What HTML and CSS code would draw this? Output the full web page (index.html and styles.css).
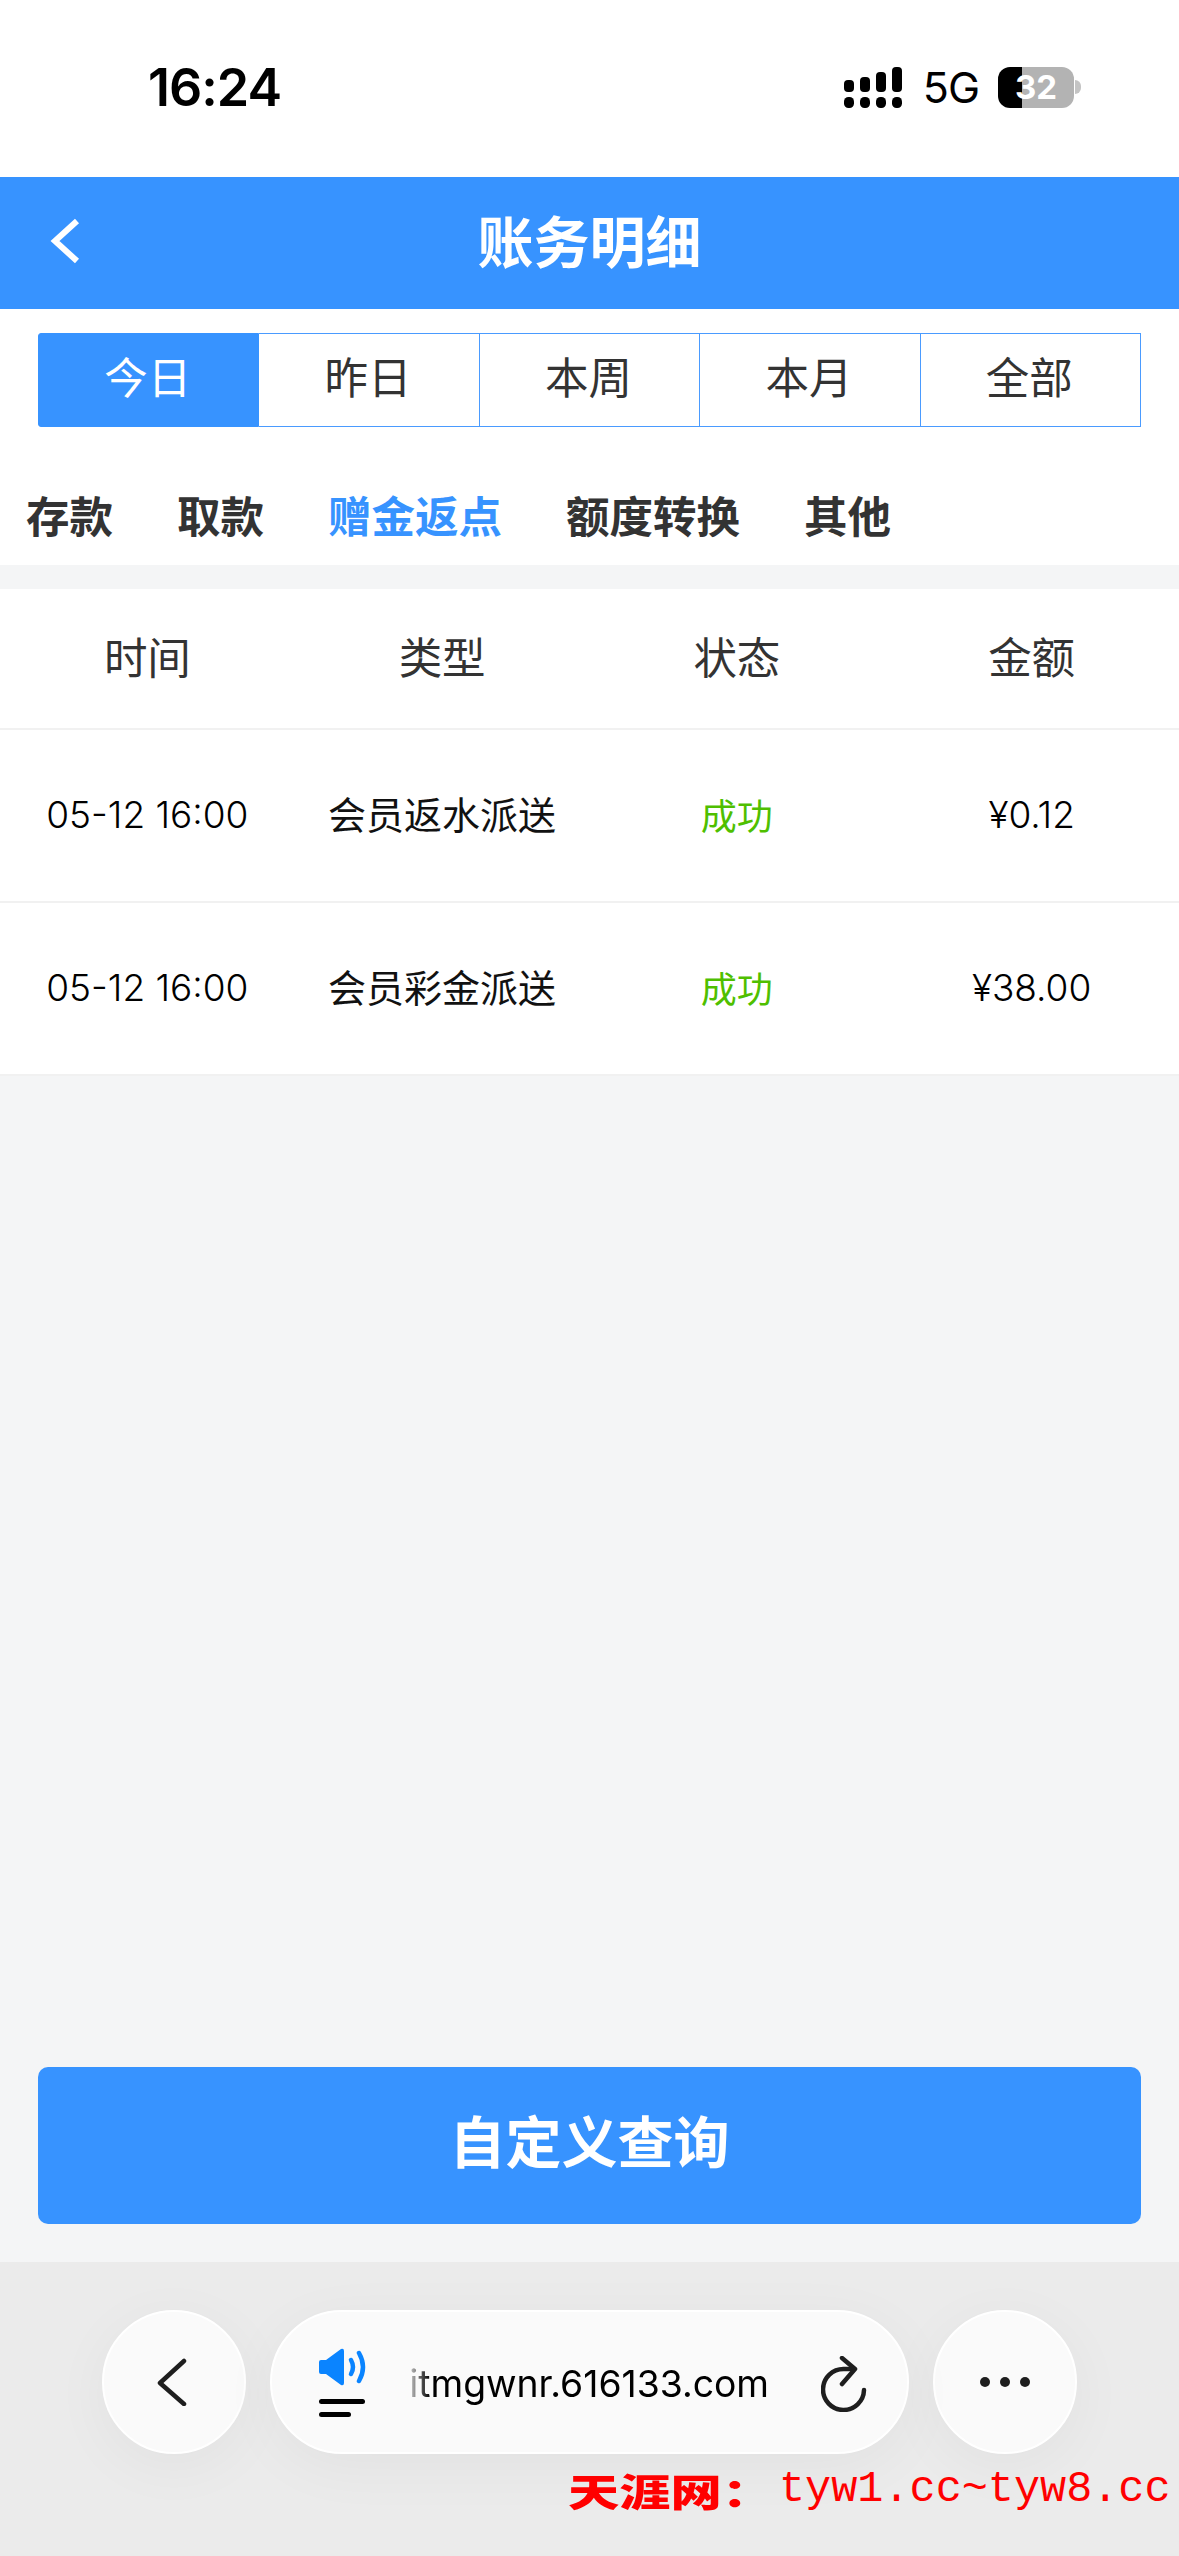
FILE: index.html
```html
<!DOCTYPE html>
<html lang="zh-CN">
<head>
<meta charset="utf-8">
<title>账务明细</title>
<link rel="stylesheet" href="styles.css">
</head>
<body>
<div class="page">
  <div class="status">
    <span class="clock">16:24</span>
    <div class="status-right">
      <svg class="signal" width="58" height="41" viewBox="0 0 58 41">
        <rect x="0" y="13" width="10" height="12" rx="4"/><rect x="16" y="10" width="10" height="15" rx="4"/><rect x="32" y="5" width="10" height="20" rx="4"/><rect x="48" y="0" width="10" height="25" rx="4"/>
        <rect x="0" y="30" width="10" height="11" rx="4.5"/><rect x="16" y="30" width="10" height="11" rx="4.5"/><rect x="32" y="30" width="10" height="11" rx="4.5"/><rect x="48" y="30" width="10" height="11" rx="4.5"/>
      </svg>
      <span class="net">5G</span>
      <div class="battery"><span class="battery-num">32</span></div>
      <span class="nub"></span>
    </div>
  </div>

  <header class="nav">
    <svg class="nav-back" width="30" height="46" viewBox="0 0 30 46"><path d="M27 3 L5 23 L27 43"/></svg>
    <h1 class="nav-title">账务明细</h1>
  </header>

  <div class="periods">
    <div class="period period-on">今日</div>
    <div class="period">昨日</div>
    <div class="period">本周</div>
    <div class="period">本月</div>
    <div class="period">全部</div>
  </div>

  <div class="cats">
    <span class="cat">存款</span>
    <span class="cat">取款</span>
    <span class="cat cat-on">赠金返点</span>
    <span class="cat">额度转换</span>
    <span class="cat">其他</span>
  </div>

  <section class="table">
    <div class="row row-head"><span>时间</span><span>类型</span><span>状态</span><span>金额</span></div>
    <div class="row"><span class="num">05-12 16:00</span><span>会员返水派送</span><span class="ok">成功</span><span class="num">¥0.12</span></div>
    <div class="row"><span class="num">05-12 16:00</span><span>会员彩金派送</span><span class="ok">成功</span><span class="num">¥38.00</span></div>
  </section>

  <div class="fill">
    <button class="query"><span class="query-text">自定义查询</span></button>
  </div>

  <footer class="browser">
    <div class="round">
      <svg class="round-back" width="30" height="48" viewBox="0 0 30 48"><path class="ic" d="M27 3 L3 25 L27 46"/></svg>
    </div>
    <div class="pill">
      <div class="media">
        <svg width="48" height="38" viewBox="0 0 48 38">
          <path class="spk" d="M2 12 H7 L22 1 Q25 0 25 3 V35 Q25 38 22 37 L7 26 H2 Q0 26 0 24 V14 Q0 12 2 12 Z"/>
          <path class="wave" d="M32 12 Q36 19 32 26"/>
          <path class="wave" d="M40 5 Q48 19 40 33"/>
        </svg>
        <span class="bar bar-long"></span>
        <span class="bar bar-short"></span>
      </div>
      <div class="url"><span>itmgwnr.616133.com</span></div>
      <svg class="reload" width="46" height="56" viewBox="0 0 46 56">
        <path class="ic" d="M43 34 A20.5 20.5 0 1 1 23 13 H33"/>
        <path class="ic" d="M21 2 L34 13 L21 28"/>
      </svg>
    </div>
    <div class="round">
      <div class="dots"><i></i><i></i><i></i></div>
    </div>
    <div class="mark"><span class="mark-cn">天涯网：</span><span class="mark-en">tyw1.cc~tyw8.cc</span></div>
  </footer>
</div>
</body>
</html>
```

FILE: styles.css
```css
* { box-sizing: border-box; }
html, body { margin: 0; padding: 0; }
body { font-family: "Noto Sans CJK SC", "Inter", sans-serif; background: #f4f5f6; }
.page { width: 1179px; height: 2556px; display: flex; flex-direction: column; overflow: hidden; }

.status { height: 177px; background: #fff; display: flex; justify-content: space-between; padding: 59px 98px 0 148px; }
.clock { font-family: "Inter", sans-serif; font-weight: 600; font-size: 52px; line-height: 58px; letter-spacing: -1px; color: #000; }
.status-right { display: flex; align-items: flex-start; height: 48px; padding-top: 8px; }
.signal { fill: #000; margin-right: 21px; }
.net { font-family: "Inter", sans-serif; font-size: 43px; font-weight: 400; line-height: 41px; color: #000; margin-right: 19px; letter-spacing: -1px; }
.battery { width: 76px; height: 41px; border-radius: 12px; background: linear-gradient(90deg, #000 0 24px, #b3b3b3 24px); display: flex; align-items: center; justify-content: center; }
.battery-num { font-family: "Inter", sans-serif; font-size: 33px; font-weight: 700; color: #fff; line-height: 1; }
.nub { width: 6px; height: 14px; margin-top: 13px; margin-left: 1px; background: #c4c4c4; border-radius: 0 7px 7px 0; }

.nav { height: 132px; background: #3793ff; position: relative; display: flex; align-items: center; justify-content: center; }
.nav-back { position: absolute; left: 50px; top: 41px; fill: none; stroke: #fff; stroke-width: 6; }
.nav-title { margin: 0 0 8px; font-size: 56px; font-weight: 600; color: #fff; line-height: 1.2; }

.periods { background: #fff; padding: 24px 38px 0; display: flex; }
.period { flex: 1; height: 94px; display: flex; align-items: center; justify-content: center; font-size: 43.5px; color: #333; border: 1px solid #4a9bff; border-left-width: 0; padding: 0 2px 9px 0; }
.period:first-child { border-left-width: 1px; }
.period-on { background: #3793ff; border-color: #3793ff; color: #fff; border-radius: 3px 0 0 3px; }

.cats { background: #fff; height: 138px; display: flex; gap: 64px; padding: 38px 26px 0; align-items: center; }
.cat { font-size: 43.5px; font-weight: 600; color: #333; line-height: 1.2; }
.cat-on { color: #3793ff; }

.table { margin-top: 24px; background: #fff; }
.row { display: grid; grid-template-columns: repeat(4, 1fr); height: 173px; align-items: center; text-align: center; border-bottom: 2px solid #f1f1f1; font-size: 38px; color: #111; }
.row span { padding-bottom: 6px; }
.row-head { height: 141px; font-size: 43.5px; color: #333; }
.row .num { font-family: "Inter", "Noto Sans CJK SC", sans-serif; font-size: 37px; font-weight: 300; color: #000; padding-bottom: 3px; }
.row .ok { color: #4fbf00; font-size: 36px; padding-bottom: 3px; }

.fill { flex: 1; display: flex; align-items: flex-end; padding: 0 38px 38px; }
.query { width: 100%; height: 157px; border: 0; border-radius: 10px; background: #3793ff; color: #fff; font-family: "Noto Sans CJK SC", sans-serif; font-weight: 600; font-size: 56px; padding: 0 0 14px; }

.browser { height: 294px; background: #ebebeb; display: flex; gap: 24px; padding: 48px 0 0 102px; position: relative; align-items: flex-start; }
.round { width: 144px; height: 144px; border-radius: 50%; background: #fafafa; border: 2px solid #fff; box-shadow: 0 12px 60px rgba(0,0,0,.045); display: flex; align-items: center; justify-content: center; flex: none; }
.round-back { margin-left: -4px; }
.ic { fill: none; stroke: #1e1e1e; stroke-width: 4.5; stroke-linecap: round; stroke-linejoin: round; }
.pill { width: 639px; height: 144px; border-radius: 72px; background: #fafafa; border: 2px solid #fff; box-shadow: 0 12px 60px rgba(0,0,0,.045); display: flex; align-items: center; flex: none; padding-left: 47px; position: relative; }
.media { width: 48px; display: flex; flex-direction: column; flex: none; }
.spk { fill: #0a84ff; }
.wave { fill: none; stroke: #0a84ff; stroke-width: 4.5; stroke-linecap: round; }
.bar { display: block; height: 5px; background: #000; border-radius: 3px; }
.bar-long { width: 46px; margin-top: 13px; }
.bar-short { width: 32px; margin-top: 8px; }
.url { width: 365px; margin-left: 37px; display: flex; justify-content: flex-end; overflow: hidden; font-family: "Inter", sans-serif; font-size: 37.3px; font-weight: 400; color: #000; white-space: nowrap; padding-top: 2px; -webkit-mask-image: linear-gradient(90deg, transparent 0, #000 26px); mask-image: linear-gradient(90deg, transparent 0, #000 26px); }
.reload { margin-left: 52px; flex: none; margin-top: 4px; }
.dots { display: flex; gap: 10px; }
.dots i { width: 10px; height: 10px; border-radius: 50%; background: #1e1e1e; display: block; }
.mark { position: absolute; left: 568px; top: 204px; display: flex; align-items: center; color: #ff0000; white-space: nowrap; }
.mark-cn { display: inline-block; width: 211px; font-family: "Noto Sans CJK SC", serif; font-weight: 900; font-size: 38px; line-height: 48px; transform: scaleX(1.35); transform-origin: left center; }
.mark-en { font-family: "Liberation Mono", monospace; font-size: 43.5px; line-height: 48px; }
```
